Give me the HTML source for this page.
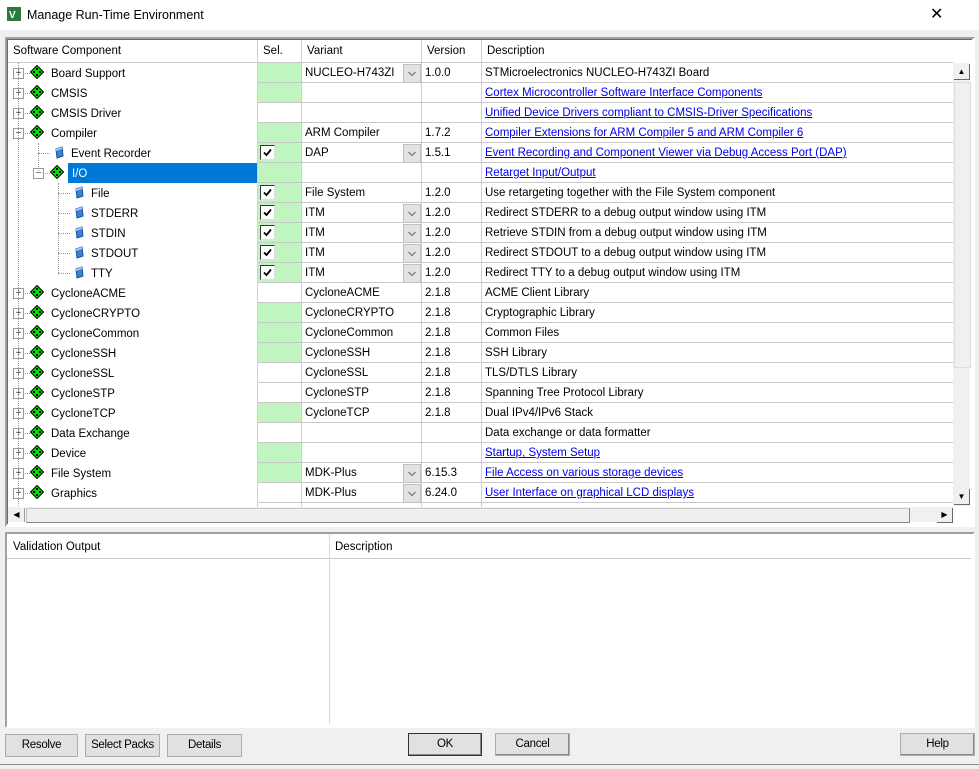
<!DOCTYPE html>
<html><head><meta charset="utf-8"><style>
body{margin:0;width:979px;height:769px;background:#f0f0f0;font-family:"Liberation Sans",sans-serif;font-size:11.5px;color:#000;position:relative;overflow:hidden}
.a{position:absolute}
.t{white-space:nowrap;line-height:20px}
a{color:#0000ee;text-decoration:underline}
.btn{position:absolute;height:21px;border:1px solid #adadad;background:#e1e1e1;text-align:center;line-height:21px;font-size:11.5px;letter-spacing:-0.3px}
</style></head><body>
<div class="a" style="left:0;top:0;width:979px;height:30px;background:#fff"></div>
<svg class="a" style="left:7px;top:7px" width="14" height="14"><rect width="14" height="14" fill="#2a7a3a"/><text x="2" y="11" font-size="10" fill="#fff" font-family="Liberation Sans" font-weight="bold">V</text></svg>
<div class="a t" style="left:27px;top:5px;font-size:12.5px">Manage Run-Time Environment</div>
<div class="a" style="left:930px;top:4px;font-size:16px">✕</div>
<div class="a" style="left:5px;top:37px;width:966px;height:486px;border:2px solid #a0a0a0;border-right-color:#fff;border-bottom-color:#fff;background:#fff"></div>
<div class="a" style="left:7px;top:39px;width:964px;height:484px;border-top:1px solid #696969;border-left:1px solid #696969"></div>
<div id="grid"></div>
<div class="a" style="left:953px;top:63px;width:17px;height:443px;background:#f0f0f0"></div>
<div class="a" style="left:954px;top:64px;width:15px;height:15px;background:#f0f0f0;border-right:1px solid #696969;border-bottom:1px solid #696969;text-align:center;font-size:8px;line-height:15px">▲</div>
<div class="a" style="left:954px;top:82px;width:15px;height:284px;background:#f0f0f0;border:1px solid #ddd"></div>
<div class="a" style="left:954px;top:489px;width:15px;height:15px;background:#f0f0f0;border-right:1px solid #696969;border-bottom:1px solid #696969;text-align:center;font-size:8px;line-height:15px">▼</div>
<div class="a" style="left:8px;top:507px;width:945px;height:15px;background:#f0f0f0"></div>
<div class="a" style="left:9px;top:508px;width:15px;height:14px;border-right:1px solid #a0a0a0;font-size:8px;line-height:14px;text-align:center">◀</div>
<div class="a" style="left:26px;top:508px;width:882px;height:13px;border:1px solid #c8c8c8;border-right-color:#888;border-bottom-color:#888;background:#efefef"></div>
<div class="a" style="left:937px;top:508px;width:15px;height:14px;border-right:1px solid #696969;border-bottom:1px solid #696969;font-size:8px;line-height:14px;text-align:center">▶</div>
<div class="a" style="left:5px;top:532px;width:966px;height:192px;border:2px solid #a0a0a0;border-right-color:#fff;border-bottom-color:#fff;background:#fff"></div>
<div class="a" style="left:7px;top:534px;width:964px;height:24px;border-bottom:1px solid #c8c8c8"></div>
<div class="a" style="left:329px;top:534px;width:1px;height:190px;background:#d8d8d8"></div>
<div class="a t" style="left:13px;top:537px">Validation Output</div>
<div class="a t" style="left:335px;top:537px">Description</div>
<div class="btn" style="left:5px;top:734px;width:71px">Resolve</div>
<div class="btn" style="left:85px;top:734px;width:73px">Select Packs</div>
<div class="btn" style="left:167px;top:734px;width:73px">Details</div>
<div class="btn" style="left:408px;top:733px;width:72px;border:1px solid #333;box-shadow:inset -1px -1px #888;background:#e1e1e1">OK</div>
<div class="btn" style="left:495px;top:733px;width:73px;box-shadow:inset -1px -1px #888">Cancel</div>
<div class="btn" style="left:900px;top:733px;width:73px;box-shadow:inset -1px -1px #888">Help</div>
<div class="a" style="left:0;top:764px;width:979px;height:1px;background:#888"></div>
<script>
var rows=[
[0,'p','d','Board Support',1,0,'NUCLEO-H743ZI',1,'1.0.0','STMicroelectronics NUCLEO-H743ZI Board',0],
[0,'p','d','CMSIS',1,0,'',0,'','Cortex Microcontroller Software Interface Components',1],
[0,'p','d','CMSIS Driver',0,0,'',0,'','Unified Device Drivers compliant to CMSIS-Driver Specifications',1],
[0,'m','d','Compiler',1,0,'ARM Compiler',0,'1.7.2','Compiler Extensions for ARM Compiler 5 and ARM Compiler 6',1],
[1,'','b','Event Recorder',1,1,'DAP',1,'1.5.1','Event Recording and Component Viewer via Debug Access Port (DAP)',1],
[1,'m','d','I/O',1,0,'',0,'','Retarget Input/Output',1],
[2,'','b','File',1,1,'File System',0,'1.2.0','Use retargeting together with the File System component',0],
[2,'','b','STDERR',1,1,'ITM',1,'1.2.0','Redirect STDERR to a debug output window using ITM',0],
[2,'','b','STDIN',1,1,'ITM',1,'1.2.0','Retrieve STDIN from a debug output window using ITM',0],
[2,'','b','STDOUT',1,1,'ITM',1,'1.2.0','Redirect STDOUT to a debug output window using ITM',0],
[2,'','b','TTY',1,1,'ITM',1,'1.2.0','Redirect TTY to a debug output window using ITM',0],
[0,'p','d','CycloneACME',0,0,'CycloneACME',0,'2.1.8','ACME Client Library',0],
[0,'p','d','CycloneCRYPTO',1,0,'CycloneCRYPTO',0,'2.1.8','Cryptographic Library',0],
[0,'p','d','CycloneCommon',1,0,'CycloneCommon',0,'2.1.8','Common Files',0],
[0,'p','d','CycloneSSH',1,0,'CycloneSSH',0,'2.1.8','SSH Library',0],
[0,'p','d','CycloneSSL',0,0,'CycloneSSL',0,'2.1.8','TLS/DTLS Library',0],
[0,'p','d','CycloneSTP',0,0,'CycloneSTP',0,'2.1.8','Spanning Tree Protocol Library',0],
[0,'p','d','CycloneTCP',1,0,'CycloneTCP',0,'2.1.8','Dual IPv4/IPv6 Stack',0],
[0,'p','d','Data Exchange',0,0,'',0,'','Data exchange or data formatter',0],
[0,'p','d','Device',1,0,'',0,'','Startup, System Setup',1],
[0,'p','d','File System',1,0,'MDK-Plus',1,'6.15.3','File Access on various storage devices',1],
[0,'p','d','Graphics',0,0,'MDK-Plus',1,'6.24.0','User Interface on graphical LCD displays',1]];
var h='';
function A(s){h+=s}
A('<div class="a t" style="left:13px;top:41px">Software Component</div><div class="a t" style="left:263px;top:41px">Sel.</div><div class="a t" style="left:307px;top:41px">Variant</div><div class="a t" style="left:427px;top:41px">Version</div><div class="a t" style="left:487px;top:41px">Description</div>');
[257,301,421,481].forEach(function(x){A('<div class="a" style="left:'+x+'px;top:40px;width:1px;height:467px;background:#d0d0d0"></div>')});
A('<div class="a" style="left:8px;top:62px;width:945px;height:1px;background:#c8c8c8"></div>');
var dia='<svg width="14" height="14"><path d="M7 0.5L13.5 7L7 13.5L0.5 7Z" fill="#00e000" stroke="#000" stroke-width="1"/><g fill="#000"><rect x="6" y="3" width="2" height="2"/><rect x="3" y="6" width="2" height="2"/><rect x="9" y="6" width="2" height="2"/><rect x="6" y="9" width="2" height="2"/></g></svg>';
var blu='<svg width="12" height="14"><path d="M3 3L9 1L10 10L4 12Z" fill="#3b7fd6" stroke="#1b4f96"/><path d="M3 3L9 1L9 3L3 5Z" fill="#a9cdf5"/></svg>';
var chk='<svg width="11" height="11"><path d="M2 5.5L4.5 8L9 2.5" fill="none" stroke="#000" stroke-width="1.8"/></svg>';
rows.forEach(function(r,i){
 var y=63+i*20;
 A('<div class="a" style="left:258px;top:'+(y+19)+'px;width:695px;height:1px;background:#c8c8c8"></div>');
 if(r[4])A('<div class="a" style="left:258px;top:'+y+'px;width:43px;height:19px;background:#c0f5c0"></div>');
 if(r[5])A('<div class="a" style="left:260px;top:'+(y+2)+'px;background:#fff;border:1px solid #333;border-right-color:#ddd;border-bottom-color:#ddd;line-height:0;padding:1px 0 0 1px;box-sizing:content-box;width:12px;height:12px">'+chk+'</div>');
 var lv=r[0],bx=[13,33,53][lv];
 A('<div class="a" style="left:'+(bx+5)+'px;top:'+(y+10)+'px;width:12px;border-top:1px dotted #999"></div>');
 if(r[1])A('<div class="a" style="left:'+bx+'px;top:'+(y+5)+'px;width:9px;height:9px;border:1px solid #999;background:#fff;font-size:10px;line-height:9px;text-align:center;color:#333">'+(r[1]=='p'?'+':'−')+'</div>');
 var ix=[30,50,70][lv];
 A('<div class="a" style="left:'+(r[2]=='d'?ix:ix+3)+'px;top:'+(y+(r[2]=='d'?2:3))+'px">'+(r[2]=='d'?dia:blu)+'</div>');
 var tx=[51,71,91][lv];
 if(r[3]=='I/O'){A('<div class="a" style="left:68px;top:'+y+'px;width:189px;height:20px;background:#0078d7"></div>');A('<div class="a t" style="left:72px;top:'+(y+1)+'px;color:#fff">I/O</div>');}
 else A('<div class="a t" style="left:'+tx+'px;top:'+(y+1)+'px">'+r[3]+'</div>');
 A('<div class="a t" style="left:305px;top:'+y+'px">'+r[6]+'</div>');
 if(r[7])A('<div class="a" style="left:403px;top:'+(y+1)+'px;width:16px;height:17px;background:#e3e3e3;border:1px solid #c0c0c0;line-height:0"><svg width="16" height="17"><path d="M4.5 7L8 10.5L11.5 7" fill="none" stroke="#666" stroke-width="1"/></svg></div>');
 A('<div class="a t" style="left:425px;top:'+y+'px">'+r[8]+'</div>');
 A('<div class="a t" style="left:485px;top:'+y+'px">'+(r[10]?'<a>'+r[9]+'</a>':r[9])+'</div>');
});
A('<div class="a" style="left:18px;top:63px;height:443px;border-left:1px dotted #999"></div>');
A('<div class="a" style="left:38px;top:143px;height:30px;border-left:1px dotted #999"></div>');
A('<div class="a" style="left:58px;top:183px;height:90px;border-left:1px dotted #999"></div>');
A('<div class="a" style="left:30px;top:503px"><svg width="16" height="4"><path d="M7 0L10 3L4 3Z" fill="#00e000"/></svg></div>');
document.getElementById('grid').innerHTML=h;
</script>
</body></html>
